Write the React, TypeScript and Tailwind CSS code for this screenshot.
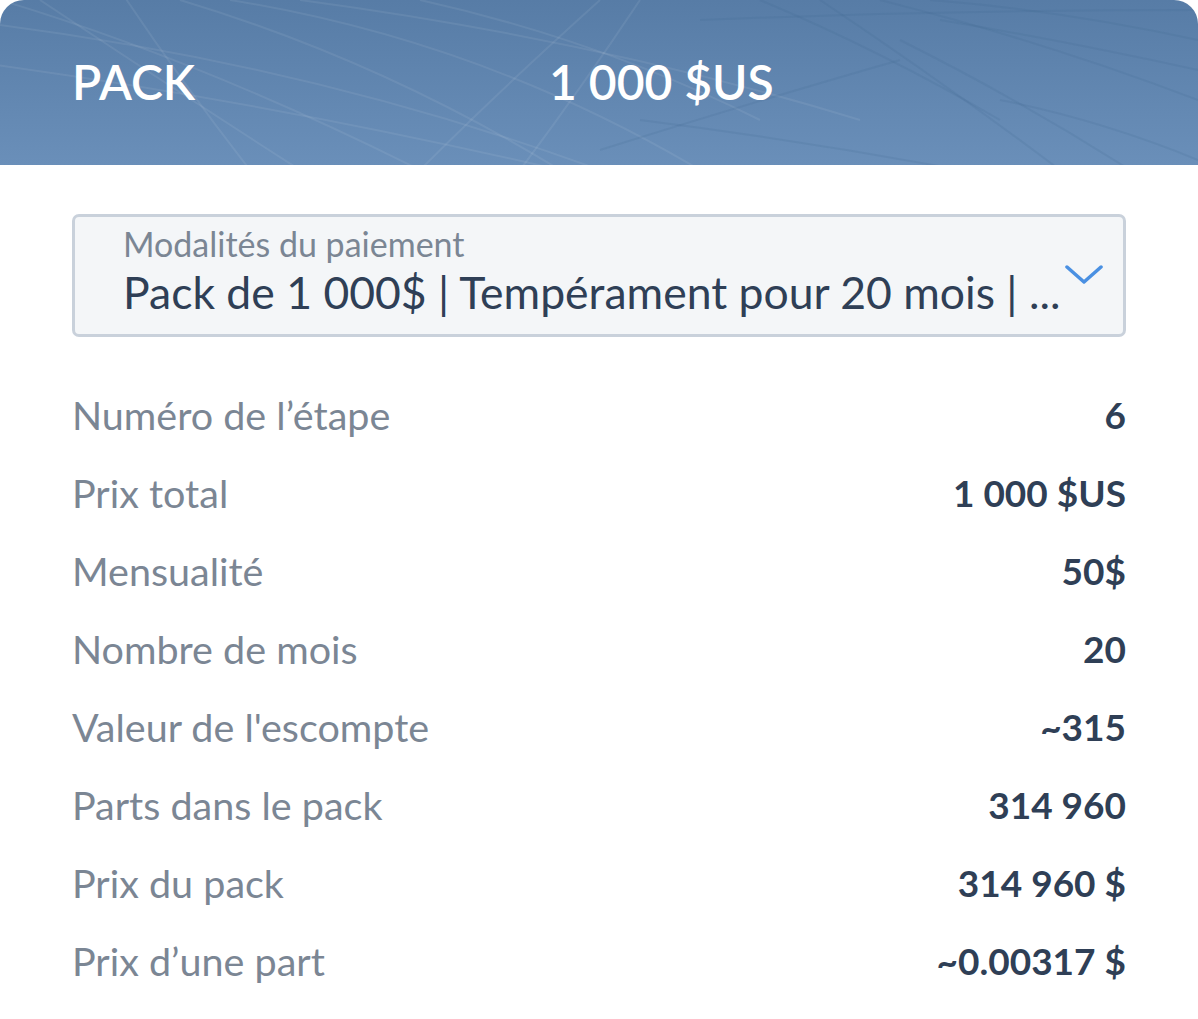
const ROWS = [
  { label: 'Numéro de l’étape', value: '6' },
  { label: 'Prix total', value: '1 000 $US' },
  { label: 'Mensualité', value: '50$' },
  { label: 'Nombre de mois', value: '20' },
  { label: "Valeur de l'escompte", value: '~315' },
  { label: 'Parts dans le pack', value: '314 960' },
  { label: 'Prix du pack', value: '314 960 $' },
  { label: 'Prix d’une part', value: '~0.00317 $' },
];

function HeaderPattern() {
  // faint fan of lines behind the header
  const light = [
    'M-40 20 Q300 60 600 170', 'M-40 60 Q260 100 560 170', 'M0 0 Q200 60 420 170', 'M40 0 Q160 80 300 170',
    'M120 -10 Q180 80 250 170', 'M180 0 Q380 60 560 170', 'M230 0 Q480 40 700 170', 'M300 0 Q600 40 860 120',
    'M420 0 Q600 40 760 120', 'M600 0 Q500 90 420 170', 'M640 0 Q580 90 520 170',
  ];
  const dark = [
    'M760 0 Q880 50 1000 120', 'M820 0 Q940 80 1060 170', 'M880 0 Q1040 40 1198 100', 'M930 0 Q1060 10 1198 40',
    'M640 120 Q800 140 960 170', 'M600 150 Q760 100 900 60', 'M940 20 Q1060 40 1198 70', 'M1000 100 Q1100 120 1198 160',
    'M900 40 Q1020 100 1130 170', 'M700 20 Q950 10 1198 10',
  ];
  return (
    <svg className="absolute inset-0 h-full w-full" viewBox="0 0 1198 165" preserveAspectRatio="none">
      {light.map((d) => (
        <path key={d} d={d} stroke="#ffffff" strokeOpacity="0.07" strokeWidth="2" fill="none" />
      ))}
      {dark.map((d) => (
        <path key={d} d={d} stroke="#3f6290" strokeOpacity="0.15" strokeWidth="2" fill="none" />
      ))}
    </svg>
  );
}

export default function App() {
  return (
    <div className="min-h-[1019px] w-[1198px] bg-white" style={{ fontFamily: 'Lato, "Open Sans", sans-serif' }}>
      {/* Header */}
      <div className="relative h-[165px] overflow-hidden rounded-t-[24px] bg-gradient-to-b from-[#577ca6] to-[#6a8fb9]">
        <HeaderPattern />
        <div className="relative flex h-full items-center px-[72px] pb-[2px] text-[48px] font-semibold text-white">
          <span className="w-[477px]">PACK</span>
          <span>1 000 $US</span>
        </div>
      </div>

      <div className="px-[72px]">
        {/* Select */}
        <div className="relative mt-[49px] h-[123px] overflow-hidden rounded-[7px] border-[3px] border-[#c9d1db] bg-[#f4f6f8] pl-[48px]">
          <div className="pt-[7px]">
            <div className="text-[34px] leading-[40px] text-[#7b8694]">Modalités du paiement</div>
            <div className="whitespace-nowrap text-[44.5px] leading-[56px] text-[#2f3f56]">
              Pack de 1 000$ | Tempérament pour 20 mois | ...
            </div>
          </div>
          <svg className="absolute left-[990px] top-[48px] h-[20px] w-[38px]" viewBox="0 0 38 20" fill="none">
            <path d="M2 2 L19 17 L36 2" stroke="#4a90e2" strokeWidth="3.5" strokeLinecap="round" strokeLinejoin="round" />
          </svg>
        </div>

        {/* Rows */}
        <div className="mt-[39px]">
          {ROWS.map((r) => (
            <div key={r.label} className="flex h-[78px] items-center justify-between">
              <span className="text-[39.5px] text-[#7b8694]">{r.label}</span>
              <span className="text-[37px] font-bold text-[#2f3f56]">{r.value}</span>
            </div>
          ))}
        </div>
      </div>
    </div>
  );
}
